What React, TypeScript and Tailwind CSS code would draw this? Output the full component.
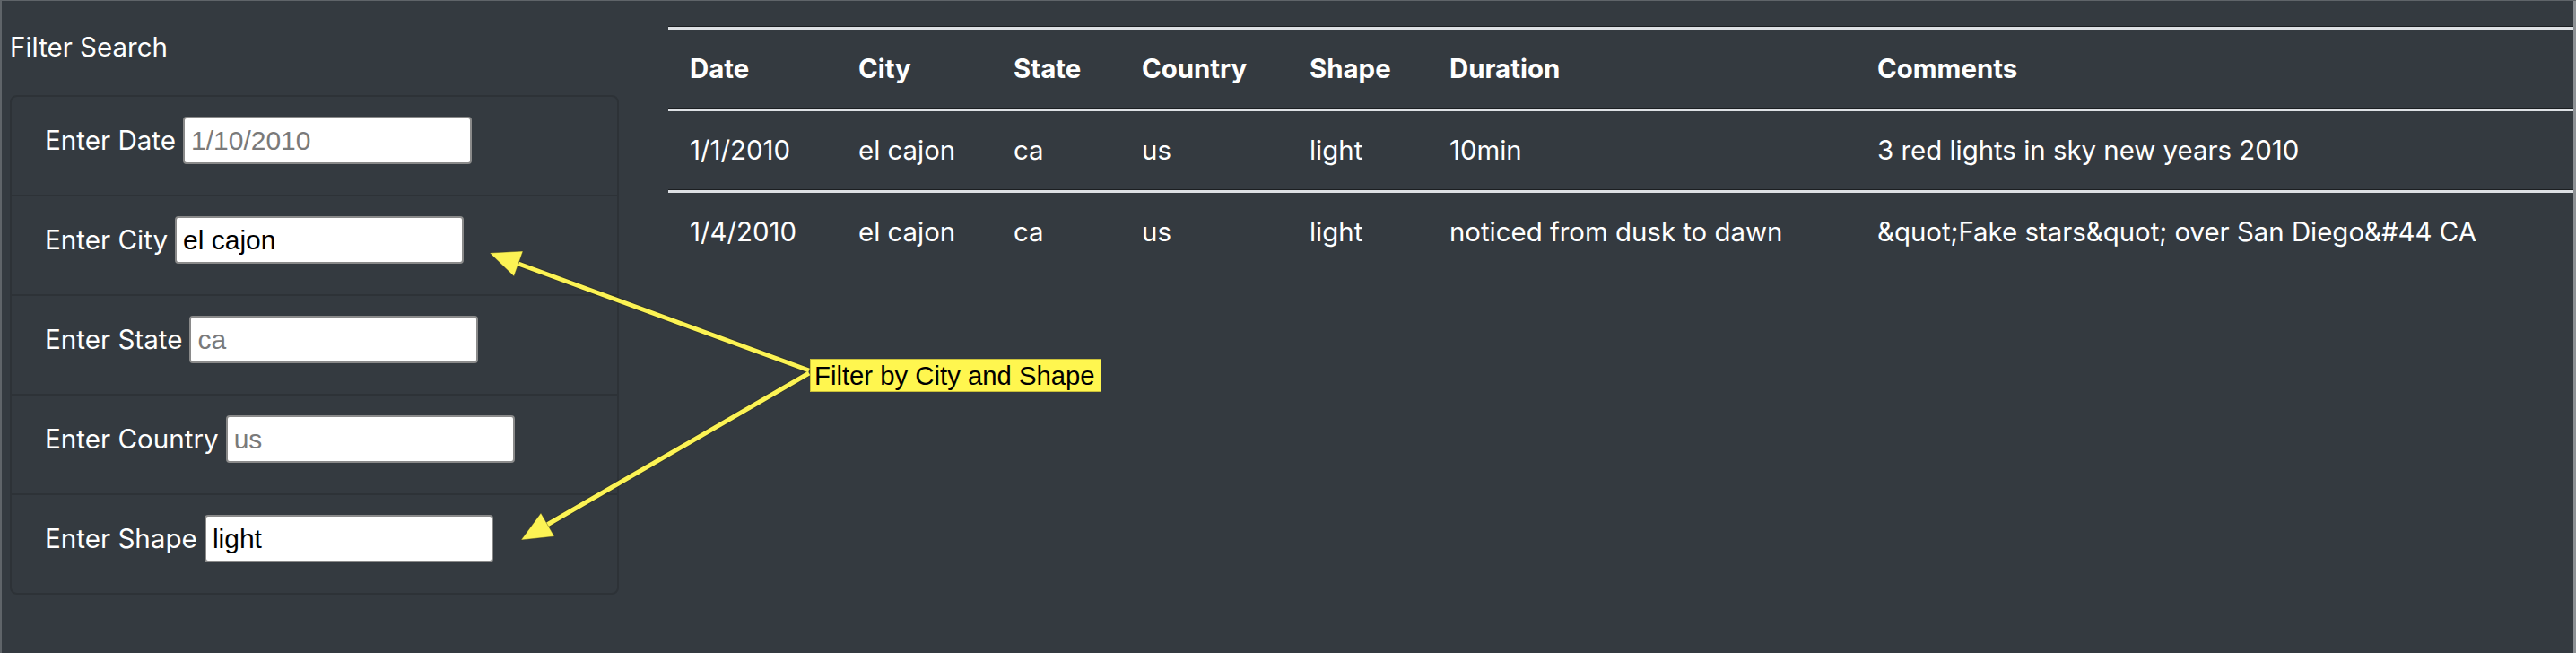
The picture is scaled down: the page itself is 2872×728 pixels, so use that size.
import React from 'react'

type Sighting = {
  date: string
  city: string
  state: string
  country: string
  shape: string
  duration: string
  comments: string
}

const ROWS: Sighting[] = [
  {
    date: '1/1/2010',
    city: 'el cajon',
    state: 'ca',
    country: 'us',
    shape: 'light',
    duration: '10min',
    comments: '3 red lights in sky new years 2010',
  },
  {
    date: '1/4/2010',
    city: 'el cajon',
    state: 'ca',
    country: 'us',
    shape: 'light',
    duration: 'noticed from dusk to dawn',
    comments: '&quot;Fake stars&quot; over San Diego&#44 CA',
  },
]

const FILTERS = [
  { label: 'Enter Date', placeholder: '1/10/2010', value: '' },
  { label: 'Enter City', placeholder: 'el cajon', value: 'el cajon' },
  { label: 'Enter State', placeholder: 'ca', value: '' },
  { label: 'Enter Country', placeholder: 'us', value: '' },
  { label: 'Enter Shape', placeholder: 'light', value: 'light' },
]

const COLS = [
  { key: 'date', title: 'Date', w: 'w-[188px]' },
  { key: 'city', title: 'City', w: 'w-[173px]' },
  { key: 'state', title: 'State', w: 'w-[143px]' },
  { key: 'country', title: 'Country', w: 'w-[187px]' },
  { key: 'shape', title: 'Shape', w: 'w-[156px]' },
  { key: 'duration', title: 'Duration', w: 'w-[477px]' },
  { key: 'comments', title: 'Comments', w: 'flex-1' },
] as const

function Row({ children }: { children: React.ReactNode }) {
  return (
    <div className="flex border-t-[3px] border-[#dde0e4] shadow-[0_-1px_0_#1b1e21]">
      {children}
    </div>
  )
}

export default function App() {
  return (
    <div className="relative h-[728px] w-full overflow-hidden bg-[#343a40] text-white shadow-[inset_2px_1px_0_#5f6469,inset_-3px_0_0_#8c9094]">
      <div className="flex pl-[11px] pr-[3px]">
        {/* filter panel */}
        <div className="w-[679px] shrink-0 font-['Inter',sans-serif]">
          <div className="mt-[34px] mb-[36px] text-[29.5px] leading-[36px]">Filter Search</div>
          <div className="rounded-[8px] border-2 border-[#2d3237]">
            {FILTERS.map((f, i) => (
              <div
                key={f.label}
                className={`px-[37px] pt-[22px] ${i < FILTERS.length - 1 ? 'h-[111px] border-b-2 border-[#2d3237]' : 'h-[109px]'}`}
              >
                <div className="flex h-[53px] items-center">
                  <label className="text-[29.6px]">{f.label}</label>
                  <input
                    defaultValue={f.value}
                    placeholder={f.value ? '' : f.placeholder}
                    className="ml-[8px] h-[53px] w-[322px] rounded-[4px] border-2 border-[#8a8a8a] bg-white px-[7px] font-['Liberation_Sans',Arial,sans-serif] text-[30px] text-black outline-none placeholder:text-[#7a7a7a]"
                  />
                </div>
              </div>
            ))}
          </div>
        </div>

        {/* results table */}
        <div className="ml-[55px] flex-1 pt-[30px] font-['Inter',sans-serif] text-[29.4px]">
          <Row>
            {COLS.map(c => (
              <div key={c.key} className={`${c.w} flex h-[88px] items-center px-[24px] font-bold`}>
                {c.title}
              </div>
            ))}
          </Row>
          {ROWS.map((r, i) => (
            <Row key={i}>
              {COLS.map(c => (
                <div key={c.key} className={`${c.w} flex h-[88px] items-center px-[24px]`}>
                  {r[c.key]}
                </div>
              ))}
            </Row>
          ))}
        </div>
      </div>

      {/* annotation */}
      <svg className="pointer-events-none absolute left-0 top-0" width="2872" height="728">
        <line x1="902" y1="413" x2="578" y2="294" stroke="#2a2a10" strokeWidth="7" strokeOpacity="0.35" />
        <line x1="902" y1="416" x2="610" y2="585" stroke="#2a2a10" strokeWidth="7" strokeOpacity="0.35" />
        <line x1="902" y1="413" x2="578" y2="294" stroke="#fcf354" strokeWidth="5" />
        <line x1="902" y1="416" x2="610" y2="585" stroke="#fcf354" strokeWidth="5" />
        <polygon points="546,282 583,280 573,308" fill="#fcf354" stroke="#3a3a1a" strokeOpacity="0.4" strokeWidth="1" />
        <polygon points="581,602 618,598 603,572" fill="#fcf354" stroke="#3a3a1a" strokeOpacity="0.4" strokeWidth="1" />
      </svg>
      <div className="absolute left-[903px] top-[400px] flex h-[37px] w-[325px] items-center border border-[#c9bf3a] bg-[#fff64f] pl-[4px] font-['Liberation_Sans',Arial,sans-serif] text-[29.3px] leading-none text-black">
        Filter by City and Shape
      </div>
    </div>
  )
}
